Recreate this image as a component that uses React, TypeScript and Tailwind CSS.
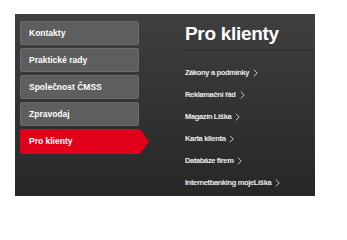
import React from 'react';

const menu = ['Kontakty', 'Praktické rady', 'Společnost ČMSS', 'Zpravodaj'];

const links = [
  'Zákony a podmínky',
  'Reklamační řád',
  'Magazín Liška',
  'Karta klienta',
  'Databáze firem',
  'Internetbanking mojeLiška',
];

function Chevron() {
  return (
    <svg width="5" height="8" viewBox="0 0 5 8" className="ml-[4px] shrink-0">
      <polyline points="0.8,0.6 4.2,4 0.8,7.4" fill="none" stroke="#d8d8d8" strokeWidth="0.9" />
    </svg>
  );
}

export default function App() {
  return (
    <div className="w-[347px] h-[212px] bg-white pt-[14px] pl-[15px] font-['Liberation_Sans',Arial,sans-serif]">
      <div className="w-[300px] h-[182px] flex bg-gradient-to-b from-[#3f3f3f] to-[#272727]">
        {/* left menu */}
        <div className="flex flex-col gap-[3px] pt-[7px] pl-[5px] w-[168px]">
          {menu.map((m) => (
            <div
              key={m}
              className="w-[119px] h-[24px] flex items-center pl-[8px] rounded-[2px] bg-[#5e5e5e] border border-[#6c6c6c] text-white text-[8.5px] font-bold"
            >
              {m}
            </div>
          ))}
          <div className="w-[129px] h-[25px] flex items-center pl-[9px] bg-[#e3001b] text-white text-[8.5px] font-bold rounded-l-[2px] [clip-path:polygon(0_0,calc(100%-9px)_0,100%_50%,calc(100%-9px)_100%,0_100%)]">
            Pro klienty
          </div>
        </div>

        {/* right content */}
        <div className="flex-1 pt-[10px]">
          <h1 className="pl-[2px] text-[19px] leading-[19px] font-bold text-white tracking-[-0.3px]">Pro klienty</h1>
          <div className="mt-[7px] h-[2px] bg-[#262626] border-b border-[#444444]" />
          <ul className="mt-[10px] pl-[2px]">
            {links.map((l) => (
              <li key={l} className="h-[22px] flex items-center text-[7.5px] font-bold text-[#ececec] tracking-[-0.35px]">
                {l}
                <Chevron />
              </li>
            ))}
          </ul>
        </div>
      </div>
    </div>
  );
}
